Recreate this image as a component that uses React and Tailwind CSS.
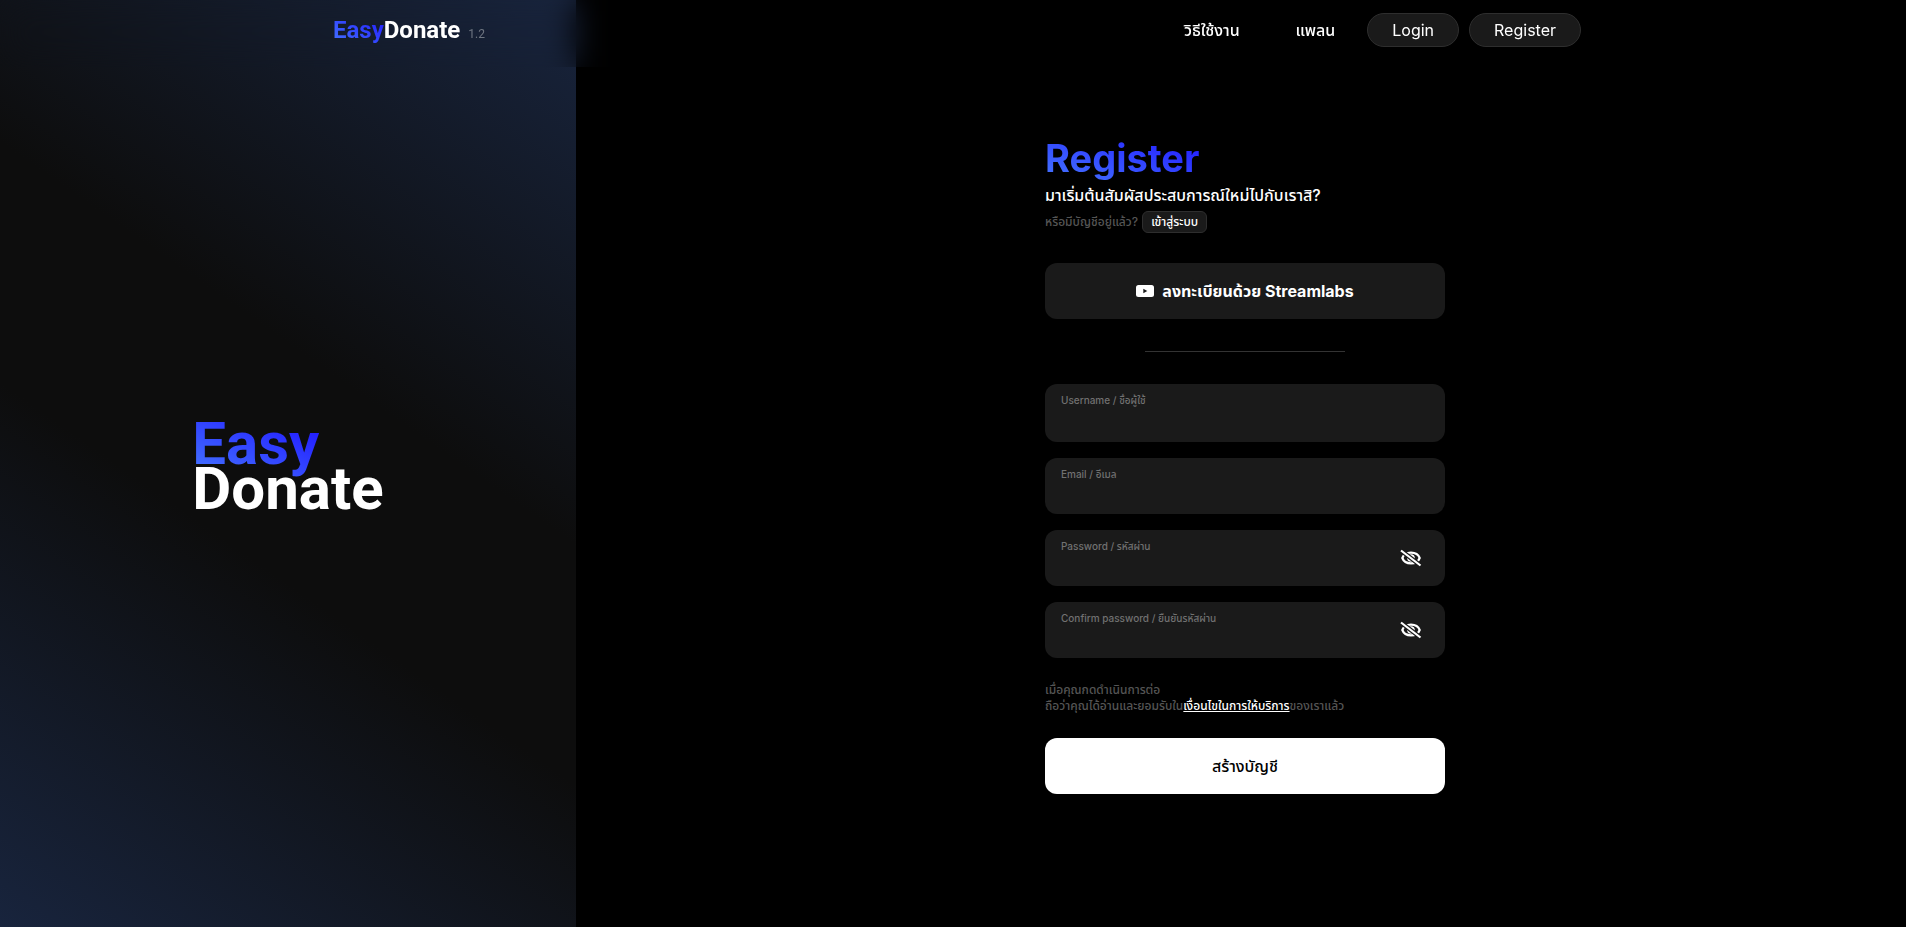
import { useState } from 'react'

const FIELDS = [
  { id: 'username', label: 'Username / ชื่อผู้ใช้', type: 'text', height: 'h-[58px]' },
  { id: 'email', label: 'Email / อีเมล', type: 'email', height: 'h-14' },
  { id: 'password', label: 'Password / รหัสผ่าน', type: 'password', height: 'h-14' },
  { id: 'confirm', label: 'Confirm password / ยืนยันรหัสผ่าน', type: 'password', height: 'h-14' },
]

function EyeOffIcon() {
  return (
    <svg viewBox="0 0 24 24" className="size-6" fill="none" stroke="currentColor" strokeWidth="2.200">
      <path d="M3.300 12c1.300-3.500 4.700-5.300 8.700-5.300s7.400 1.800 8.700 5.300c-1.300 3.500-4.700 5.300-8.700 5.300s-7.400-1.800-8.700-5.300z" strokeLinejoin="round" />
      <circle cx="12" cy="12" r="2.700" />
      <path d="M2 4.500l19.500 15" stroke="#1a1a1a" strokeWidth="4.500" />
      <path d="M2 4.500l19.500 15" />
    </svg>
  )
}

function VideoIcon() {
  return (
    <svg viewBox="0 0 18 12" className="h-3 w-[18px]">
      <rect width="18" height="12" rx="2.500" fill="currentColor" />
      <path d="M7.300 3.700v4.600l4-2.300z" fill="#1a1a1a" />
    </svg>
  )
}

function Header() {
  return (
    <header className="fixed inset-x-0 top-0 z-10 backdrop-blur-lg">
      <div className="mx-auto flex h-[67px] max-w-7xl items-center justify-between pb-2 pl-5 pr-3">
        <a href="#" className="flex items-baseline font-[Roboto,sans-serif] text-2xl font-bold">
          <span className="bg-linear-to-tr/srgb from-[#4678ff] to-[#1f14ff] bg-clip-text text-transparent">Easy</span>
          <span>Donate</span>
          <span className="ml-2 text-xs font-normal text-[#6f7682]">1.2</span>
        </a>
        <nav className="flex items-center text-base">
          <a href="#" className="mr-14 font-medium">วิธีใช้งาน</a>
          <a href="#" className="mr-8 font-medium">แพลน</a>
          <a href="#" className="mr-2.5 rounded-full border border-[#2e2e2e] bg-[#1a1a1a] px-6 py-1">Login</a>
          <a href="#" className="rounded-full border border-[#2e2e2e] bg-[#1a1a1a] px-6 py-1">Register</a>
        </nav>
      </div>
    </header>
  )
}

function Field({ id, label, type, height }) {
  const [visible, setVisible] = useState(false)

  return (
    <div className={`flex items-center rounded-xl bg-[#1a1a1a] px-4 ${height}`}>
      <div className="flex h-full flex-1 flex-col pt-2">
        <label htmlFor={id} className="text-[10px] leading-4 font-medium text-[#717171]">{label}</label>
        <input id={id} type={visible ? 'text' : type} className="w-full bg-transparent text-sm outline-none" />
      </div>
      {type === 'password' && (
        <button type="button" aria-label="Toggle password" onClick={() => setVisible(!visible)} className="mr-1.5">
          <EyeOffIcon />
        </button>
      )}
    </div>
  )
}

function RegisterForm() {
  return (
    <form className="w-full max-w-[400px]" onSubmit={(e) => e.preventDefault()}>
      <h1 className="w-fit bg-linear-to-tr/srgb from-[#4678ff] to-[#1f14ff] bg-clip-text text-[38px] leading-[50px] font-bold text-transparent">
        Register
      </h1>
      <p className="text-base font-medium">มาเริ่มต้นสัมผัสประสบการณ์ใหม่ไปกับเราสิ?</p>
      <div className="mt-1 flex items-center gap-1 text-xs font-medium text-[#555555]">
        <span>หรือมีบัญชีอยู่แล้ว?</span>
        <a href="#" className="rounded-md border border-[#2e2e2e] bg-[#1a1a1a] px-2 leading-5 text-white">เข้าสู่ระบบ</a>
      </div>

      <button type="button" className="mt-[30px] flex h-14 w-full items-center justify-center gap-2 rounded-xl bg-[#1a1a1a] text-base font-bold">
        <VideoIcon />
        ลงทะเบียนด้วย Streamlabs
      </button>

      <hr className="mx-auto my-8 w-1/2 border-[#333333]" />

      <div className="flex flex-col gap-4">
        {FIELDS.map((field) => (
          <Field key={field.id} {...field} />
        ))}
      </div>

      <p className="mt-6 text-xs font-medium text-[#555555]">
        เมื่อคุณกดดำเนินการต่อ
        <br />
        ถือว่าคุณได้อ่านและยอมรับใน
        <a href="#" className="text-white underline">เงื่อนไขในการให้บริการ</a>
        ของเราแล้ว
      </p>

      <button type="submit" className="mt-6 h-14 w-full rounded-xl bg-white text-base font-medium text-black">
        สร้างบัญชี
      </button>
    </form>
  )
}

export default function App() {
  return (
    <div className="flex min-h-screen bg-black font-[Inter,'Noto_Sans_Thai','Noto_Sans',sans-serif] text-white">
      <Header />
      <aside className="flex w-[576px] shrink-0 items-center justify-center bg-[linear-gradient(35deg,#18243d_0%,#0d0d0d_41%,#0d0d0d_59%,#18243d_100%)]">
        <div className="pt-1 font-[Roboto,sans-serif] text-6xl leading-[45px] font-bold">
          <p className="-mb-3 w-fit bg-linear-to-tr/srgb from-[#4678ff] to-[#1f14ff] bg-clip-text pb-3 text-transparent">Easy</p>
          <p>Donate</p>
        </div>
      </aside>
      <main className="flex flex-1 items-center justify-center pl-2">
        <RegisterForm />
      </main>
    </div>
  )
}
